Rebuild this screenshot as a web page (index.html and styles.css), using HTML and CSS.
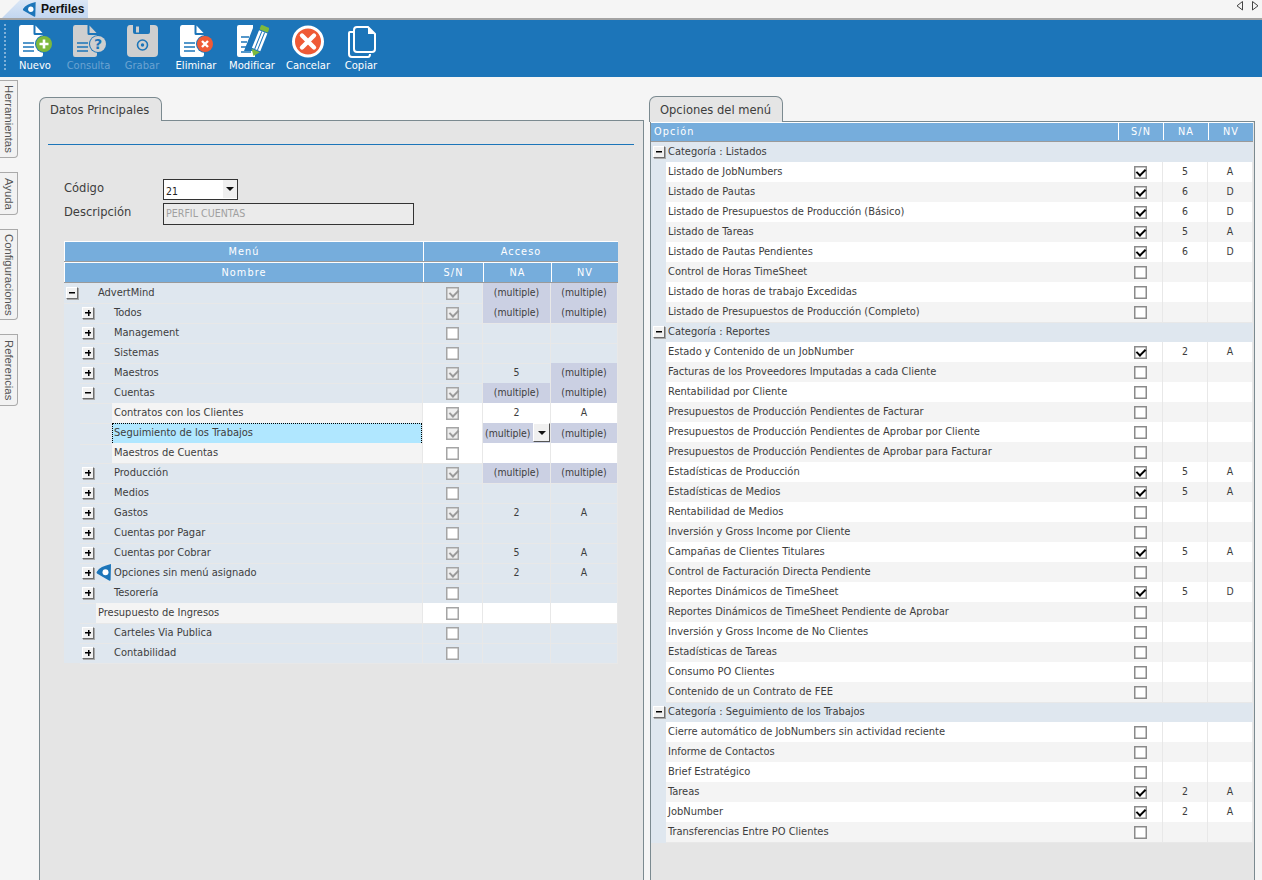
FILE: index.html
```html
<!DOCTYPE html>
<html lang="es">
<head>
<meta charset="utf-8">
<title>Perfiles</title>
<link rel="stylesheet" href="styles.css">
</head>
<body>
<svg class="defs" width="0" height="0" aria-hidden="true">
  <symbol id="logo" viewBox="0 0 16 17"><path d="M15 0 L14.6 16 Q14.4 17 13 16.4 L1 9.6 Q0 8.5 1 7.4 Q4 2.5 15 0Z" fill="#1c75b9"/><circle cx="9.5" cy="8.2" r="3" fill="#fff"/></symbol>
  <symbol id="doc" viewBox="0 0 34 34">
    <path d="M3 1 H15.5 V9.5 Q15.5 11 17 11 H25 V30.5 Q25 33 22.5 33 H3 Q1 33 1 30.5 V3.5 Q1 1 3 1Z"/>
    <path d="M17.5 1.5 L24.5 9 H17.5Z"/>
  </symbol>
</svg>
<header class="tabstrip">
  <div class="doc-tab"><svg class="logo-small"><use href="#logo"/></svg><span>Perfiles</span></div>
  <div class="nav-arrows">
    <svg width="8" height="10" viewBox="0 0 8 10"><path d="M6.5 .5 V9 L1 4.8Z" fill="none" stroke="#444"/></svg>
    <svg width="8" height="10" viewBox="0 0 8 10"><path d="M1.5 .5 V9 L7 4.8Z" fill="none" stroke="#444"/></svg>
  </div>
</header>
<nav class="toolbar">
  <div class="grip"></div>
  <div class="tool w54"><svg class="ico" viewBox="0 0 34 34"><use href="#doc" fill="#fff"/><path d="M5 19H16M5 23H16M5 27H16" stroke="#1c75b9" stroke-width="1.6"/><circle cx="26" cy="20" r="9" fill="#1c75b9"/><circle cx="26" cy="20" r="8" fill="#7db93c"/><path d="M26 15.5V24.5M21.5 20H30.5" stroke="#fff" stroke-width="2.6"/></svg><span>Nuevo</span></div>
  <div class="tool w53 off"><svg class="ico" viewBox="0 0 34 34"><use href="#doc" fill="#cfcfcf"/><path d="M5 19H16M5 23H16M5 27H16" stroke="#1c75b9" stroke-width="1.6"/><circle cx="26" cy="20" r="9" fill="#1c75b9"/><circle cx="26" cy="20" r="8" fill="#cfcfcf"/><text x="26" y="25" text-anchor="middle" class="qm">?</text></svg><span>Consulta</span></div>
  <div class="tool w54 off"><svg class="ico" viewBox="0 0 34 34"><path d="M5 1 H29 Q33 1 33 5 V29 Q33 33 29 33 H6 Q2 33 2 29 V5 Q2 1 5 1Z" fill="#cfcfcf"/><path d="M8 1 H25 V8 Q25 10 23 10 H10 Q8 10 8 8Z" fill="#1c75b9"/><rect x="11" y="2.500" width="3" height="6" fill="#cfcfcf"/><circle cx="17.500" cy="21" r="5" fill="none" stroke="#1c75b9" stroke-width="1.600"/><circle cx="17.500" cy="21" r="1.700" fill="#1c75b9"/></svg><span>Grabar</span></div>
  <div class="tool w54"><svg class="ico" viewBox="0 0 34 34"><use href="#doc" fill="#fff"/><path d="M5 19H16M5 23H16M5 27H16" stroke="#1c75b9" stroke-width="1.6"/><circle cx="26" cy="20" r="9" fill="#1c75b9"/><circle cx="26" cy="20" r="8" fill="#ef5a36"/><path d="M23 17L29 23M29 17L23 23" stroke="#fff" stroke-width="2.4"/></svg><span>Eliminar</span></div>
  <div class="tool w58"><svg class="ico" viewBox="0 0 34 34"><path d="M4 1 H18 V4 L9 27 H20 V33 H4 Q2 33 2 31 V3 Q2 1 4 1Z" fill="#fff"/><path d="M6 13H14M6 18H12M6 23H11M6 28H16" stroke="#1c75b9" stroke-width="1.600"/><g transform="rotate(22 24 17)"><rect x="20" y="1" width="9" height="5" rx="1" fill="#7db93c"/><rect x="20" y="7" width="9" height="19" fill="#fff"/><path d="M23 7V26M26 7V26" stroke="#1c75b9" stroke-width="1"/><path d="M20 27 H29 L24.500 33Z" fill="#7db93c"/></g></svg><span>Modificar</span></div>
  <div class="tool w54"><svg class="ico" viewBox="0 0 34 34"><circle cx="17" cy="17.500" r="14.500" fill="#ef5a36" stroke="#fff" stroke-width="3"/><path d="M11 11.500L23 23.500M23 11.500L11 23.500" stroke="#fff" stroke-width="4.400" stroke-linecap="round"/></svg><span>Cancelar</span></div>
  <div class="tool w52"><svg class="ico" viewBox="0 0 34 34"><path d="M10 8 H6 Q5 8 5 9 V30 Q5 33 8 33 H24 Q26 33 26 30" fill="none" stroke="#fff" stroke-width="2"/><path d="M13 3 H24 L31 10 V25 Q31 28 28 28 H13 Q10 28 10 25 V6 Q10 3 13 3Z" fill="#1c75b9" stroke="#fff" stroke-width="2"/><path d="M24 3 V10 H31Z" fill="#fff"/></svg><span>Copiar</span></div>
</nav>
<main class="main">
  <aside class="side">
    <div class="side-tab h77">Herramientas</div>
    <div class="side-tab h43">Ayuda</div>
    <div class="side-tab h91">Configuraciones</div>
    <div class="side-tab h72">Referencias</div>
  </aside>
  <section class="pane pane-left">
    <div class="pane-tab tab-l">Datos Principales</div>
    <div class="pane-body body-l">
      <div class="rule"></div>
      <div class="form">
        <div class="form-row"><label>Código</label><div class="select"><span>21</span><i class="sel-btn"></i></div></div>
        <div class="form-row"><label>Descripción</label><div class="input">PERFIL CUENTAS</div></div>
      </div>
      <div class="tree">
        <div class="tr head"><div class="th span1">Menú</div><div class="th span3">Acceso</div></div>
        <div class="tr head head2"><div class="th">Nombre</div><div class="th">S/N</div><div class="th">NA</div><div class="th">NV</div></div>

        <div class="tr"><div class="nm"><span class="sl"><i class="exp minus"></i></span><span class="sl"></span><span class="lb">AdvertMind</span></div><div class="c"><i class="cb on dis"></i></div><div class="c m">(multiple)</div><div class="c m">(multiple)</div></div>
        <div class="tr"><div class="nm"><span class="sl bare"></span><span class="sl"><i class="exp plus"></i></span><span class="sl"></span><span class="lb">Todos</span></div><div class="c"><i class="cb on dis"></i></div><div class="c m">(multiple)</div><div class="c m">(multiple)</div></div>
        <div class="tr"><div class="nm"><span class="sl bare"></span><span class="sl"><i class="exp plus"></i></span><span class="sl"></span><span class="lb">Management</span></div><div class="c"><i class="cb dis"></i></div><div class="c"></div><div class="c"></div></div>
        <div class="tr"><div class="nm"><span class="sl bare"></span><span class="sl"><i class="exp plus"></i></span><span class="sl"></span><span class="lb">Sistemas</span></div><div class="c"><i class="cb dis"></i></div><div class="c"></div><div class="c"></div></div>
        <div class="tr"><div class="nm"><span class="sl bare"></span><span class="sl"><i class="exp plus"></i></span><span class="sl"></span><span class="lb">Maestros</span></div><div class="c"><i class="cb on dis"></i></div><div class="c">5</div><div class="c m">(multiple)</div></div>
        <div class="tr"><div class="nm"><span class="sl bare"></span><span class="sl"><i class="exp minus"></i></span><span class="sl"></span><span class="lb">Cuentas</span></div><div class="c"><i class="cb on dis"></i></div><div class="c m">(multiple)</div><div class="c m">(multiple)</div></div>

        <div class="tr leaf"><div class="nm"><span class="sl bare"></span><span class="sl"></span><span class="sl"></span><span class="lb fill">Contratos con los Clientes</span></div><div class="c"><i class="cb on dis"></i></div><div class="c">2</div><div class="c">A</div></div>
        <div class="tr leaf"><div class="nm"><span class="sl bare"></span><span class="sl"></span><span class="sl"></span><span class="lb fill sel">Seguimiento de los Trabajos</span></div><div class="c"><i class="cb on dis"></i></div><div class="c m drop"><span>(multiple)</span><i class="drop-btn"></i></div><div class="c m">(multiple)</div></div>
        <div class="tr leaf"><div class="nm"><span class="sl bare"></span><span class="sl"></span><span class="sl"></span><span class="lb fill">Maestros de Cuentas</span></div><div class="c"><i class="cb dis"></i></div><div class="c"></div><div class="c"></div></div>

        <div class="tr"><div class="nm"><span class="sl bare"></span><span class="sl"><i class="exp plus"></i></span><span class="sl"></span><span class="lb">Producción</span></div><div class="c"><i class="cb on dis"></i></div><div class="c m">(multiple)</div><div class="c m">(multiple)</div></div>
        <div class="tr"><div class="nm"><span class="sl bare"></span><span class="sl"><i class="exp plus"></i></span><span class="sl"></span><span class="lb">Medios</span></div><div class="c"><i class="cb dis"></i></div><div class="c"></div><div class="c"></div></div>
        <div class="tr"><div class="nm"><span class="sl bare"></span><span class="sl"><i class="exp plus"></i></span><span class="sl"></span><span class="lb">Gastos</span></div><div class="c"><i class="cb on dis"></i></div><div class="c">2</div><div class="c">A</div></div>
        <div class="tr"><div class="nm"><span class="sl bare"></span><span class="sl"><i class="exp plus"></i></span><span class="sl"></span><span class="lb">Cuentas por Pagar</span></div><div class="c"><i class="cb dis"></i></div><div class="c"></div><div class="c"></div></div>
        <div class="tr"><div class="nm"><span class="sl bare"></span><span class="sl"><i class="exp plus"></i></span><span class="sl"></span><span class="lb">Cuentas por Cobrar</span></div><div class="c"><i class="cb on dis"></i></div><div class="c">5</div><div class="c">A</div></div>
        <div class="tr"><div class="nm"><span class="sl bare"></span><span class="sl"><i class="exp plus"></i></span><span class="sl"><svg class="logo-row"><use href="#logo"/></svg></span><span class="lb">Opciones sin menú asignado</span></div><div class="c"><i class="cb on dis"></i></div><div class="c">2</div><div class="c">A</div></div>
        <div class="tr"><div class="nm"><span class="sl bare"></span><span class="sl"><i class="exp plus"></i></span><span class="sl"></span><span class="lb">Tesorería</span></div><div class="c"><i class="cb dis"></i></div><div class="c"></div><div class="c"></div></div>
        <div class="tr leaf"><div class="nm"><span class="sl bare"></span><span class="sl"></span><span class="lb fill">Presupuesto de Ingresos</span></div><div class="c"><i class="cb dis"></i></div><div class="c"></div><div class="c"></div></div>
        <div class="tr"><div class="nm"><span class="sl bare"></span><span class="sl"><i class="exp plus"></i></span><span class="sl"></span><span class="lb">Carteles Via Publica</span></div><div class="c"><i class="cb dis"></i></div><div class="c"></div><div class="c"></div></div>
        <div class="tr"><div class="nm"><span class="sl bare"></span><span class="sl"><i class="exp plus"></i></span><span class="sl"></span><span class="lb">Contabilidad</span></div><div class="c"><i class="cb dis"></i></div><div class="c"></div><div class="c"></div></div>
      </div>
    </div>
  </section>
  <section class="pane pane-right">
    <div class="pane-tab tab-r">Opciones del menú</div>
    <div class="pane-body body-r">
      <div class="opts">
        <div class="ot head"><div class="th left">Opción</div><div class="th">S/N</div><div class="th">NA</div><div class="th">NV</div></div>

        <div class="ot grp"><div class="nm"><span class="ex-sl"><i class="exp minus"></i></span><span class="lb">Categoría : Listados</span></div></div>
        <div class="ot w"><div class="nm"><span class="ex-sl"></span><span class="lb fill">Listado de JobNumbers</span></div><div class="c"><i class="cb on"></i></div><div class="c">5</div><div class="c">A</div></div>
        <div class="ot g"><div class="nm"><span class="ex-sl"></span><span class="lb fill">Listado de Pautas</span></div><div class="c"><i class="cb on"></i></div><div class="c">6</div><div class="c">D</div></div>
        <div class="ot w"><div class="nm"><span class="ex-sl"></span><span class="lb fill">Listado de Presupuestos de Producción (Básico)</span></div><div class="c"><i class="cb on"></i></div><div class="c">6</div><div class="c">D</div></div>
        <div class="ot g"><div class="nm"><span class="ex-sl"></span><span class="lb fill">Listado de Tareas</span></div><div class="c"><i class="cb on"></i></div><div class="c">5</div><div class="c">A</div></div>
        <div class="ot w"><div class="nm"><span class="ex-sl"></span><span class="lb fill">Listado de Pautas Pendientes</span></div><div class="c"><i class="cb on"></i></div><div class="c">6</div><div class="c">D</div></div>
        <div class="ot g"><div class="nm"><span class="ex-sl"></span><span class="lb fill">Control de Horas TimeSheet</span></div><div class="c"><i class="cb"></i></div><div class="c"></div><div class="c"></div></div>
        <div class="ot w"><div class="nm"><span class="ex-sl"></span><span class="lb fill">Listado de horas de trabajo Excedidas</span></div><div class="c"><i class="cb"></i></div><div class="c"></div><div class="c"></div></div>
        <div class="ot g"><div class="nm"><span class="ex-sl"></span><span class="lb fill">Listado de Presupuestos de Producción (Completo)</span></div><div class="c"><i class="cb"></i></div><div class="c"></div><div class="c"></div></div>

        <div class="ot grp"><div class="nm"><span class="ex-sl"><i class="exp minus"></i></span><span class="lb">Categoría : Reportes</span></div></div>
        <div class="ot w"><div class="nm"><span class="ex-sl"></span><span class="lb fill">Estado y Contenido de un JobNumber</span></div><div class="c"><i class="cb on"></i></div><div class="c">2</div><div class="c">A</div></div>
        <div class="ot g"><div class="nm"><span class="ex-sl"></span><span class="lb fill">Facturas de los Proveedores Imputadas a cada Cliente</span></div><div class="c"><i class="cb"></i></div><div class="c"></div><div class="c"></div></div>
        <div class="ot w"><div class="nm"><span class="ex-sl"></span><span class="lb fill">Rentabilidad por Cliente</span></div><div class="c"><i class="cb"></i></div><div class="c"></div><div class="c"></div></div>
        <div class="ot g"><div class="nm"><span class="ex-sl"></span><span class="lb fill">Presupuestos de Producción Pendientes de Facturar</span></div><div class="c"><i class="cb"></i></div><div class="c"></div><div class="c"></div></div>
        <div class="ot w"><div class="nm"><span class="ex-sl"></span><span class="lb fill">Presupuestos de Producción Pendientes de Aprobar por Cliente</span></div><div class="c"><i class="cb"></i></div><div class="c"></div><div class="c"></div></div>
        <div class="ot g"><div class="nm"><span class="ex-sl"></span><span class="lb fill">Presupuestos de Producción Pendientes de Aprobar para Facturar</span></div><div class="c"><i class="cb"></i></div><div class="c"></div><div class="c"></div></div>
        <div class="ot w"><div class="nm"><span class="ex-sl"></span><span class="lb fill">Estadísticas de Producción</span></div><div class="c"><i class="cb on"></i></div><div class="c">5</div><div class="c">A</div></div>
        <div class="ot g"><div class="nm"><span class="ex-sl"></span><span class="lb fill">Estadísticas de Medios</span></div><div class="c"><i class="cb on"></i></div><div class="c">5</div><div class="c">A</div></div>
        <div class="ot w"><div class="nm"><span class="ex-sl"></span><span class="lb fill">Rentabilidad de Medios</span></div><div class="c"><i class="cb"></i></div><div class="c"></div><div class="c"></div></div>
        <div class="ot g"><div class="nm"><span class="ex-sl"></span><span class="lb fill">Inversión y Gross Income por Cliente</span></div><div class="c"><i class="cb"></i></div><div class="c"></div><div class="c"></div></div>
        <div class="ot w"><div class="nm"><span class="ex-sl"></span><span class="lb fill">Campañas de Clientes Titulares</span></div><div class="c"><i class="cb on"></i></div><div class="c">5</div><div class="c">A</div></div>
        <div class="ot g"><div class="nm"><span class="ex-sl"></span><span class="lb fill">Control de Facturación Directa Pendiente</span></div><div class="c"><i class="cb"></i></div><div class="c"></div><div class="c"></div></div>
        <div class="ot w"><div class="nm"><span class="ex-sl"></span><span class="lb fill">Reportes Dinámicos de TimeSheet</span></div><div class="c"><i class="cb on"></i></div><div class="c">5</div><div class="c">D</div></div>
        <div class="ot g"><div class="nm"><span class="ex-sl"></span><span class="lb fill">Reportes Dinámicos de TimeSheet Pendiente de Aprobar</span></div><div class="c"><i class="cb"></i></div><div class="c"></div><div class="c"></div></div>
        <div class="ot w"><div class="nm"><span class="ex-sl"></span><span class="lb fill">Inversión y Gross Income de No Clientes</span></div><div class="c"><i class="cb"></i></div><div class="c"></div><div class="c"></div></div>
        <div class="ot g"><div class="nm"><span class="ex-sl"></span><span class="lb fill">Estadísticas de Tareas</span></div><div class="c"><i class="cb"></i></div><div class="c"></div><div class="c"></div></div>
        <div class="ot w"><div class="nm"><span class="ex-sl"></span><span class="lb fill">Consumo PO Clientes</span></div><div class="c"><i class="cb"></i></div><div class="c"></div><div class="c"></div></div>
        <div class="ot g"><div class="nm"><span class="ex-sl"></span><span class="lb fill">Contenido de un Contrato de FEE</span></div><div class="c"><i class="cb"></i></div><div class="c"></div><div class="c"></div></div>

        <div class="ot grp"><div class="nm"><span class="ex-sl"><i class="exp minus"></i></span><span class="lb">Categoría : Seguimiento de los Trabajos</span></div></div>
        <div class="ot w"><div class="nm"><span class="ex-sl"></span><span class="lb fill">Cierre automático de JobNumbers sin actividad reciente</span></div><div class="c"><i class="cb"></i></div><div class="c"></div><div class="c"></div></div>
        <div class="ot g"><div class="nm"><span class="ex-sl"></span><span class="lb fill">Informe de Contactos</span></div><div class="c"><i class="cb"></i></div><div class="c"></div><div class="c"></div></div>
        <div class="ot w"><div class="nm"><span class="ex-sl"></span><span class="lb fill">Brief Estratégico</span></div><div class="c"><i class="cb"></i></div><div class="c"></div><div class="c"></div></div>
        <div class="ot g"><div class="nm"><span class="ex-sl"></span><span class="lb fill">Tareas</span></div><div class="c"><i class="cb on"></i></div><div class="c">2</div><div class="c">A</div></div>
        <div class="ot w"><div class="nm"><span class="ex-sl"></span><span class="lb fill">JobNumber</span></div><div class="c"><i class="cb on"></i></div><div class="c">2</div><div class="c">A</div></div>
        <div class="ot g"><div class="nm"><span class="ex-sl"></span><span class="lb fill">Transferencias Entre PO Clientes</span></div><div class="c"><i class="cb"></i></div><div class="c"></div><div class="c"></div></div>
      </div>
    </div>
  </section>
</main>
</body>
</html>
```

FILE: styles.css
```css
* { box-sizing: border-box; }
html, body { margin: 0; height: 100%; }
body {
  width: 1262px;
  height: 880px;
  overflow: hidden;
  background: #f5f5f5;
  color: #3d3d3d;
  font-family: "DejaVu Sans Condensed", "DejaVu Sans", sans-serif;
  font-size: 10px;
  display: flex;
  flex-direction: column;
}
.defs { position: absolute; }
i { display: block; font-style: normal; }

/* top strip */
.tabstrip {
  height: 20px;
  flex: none;
  display: flex;
  justify-content: space-between;
  border-bottom: 2px solid #a3a3a3;
}
.doc-tab {
  width: 86px;
  height: 18px;
  margin-left: 2px;
  padding-left: 20px;
  display: flex;
  align-items: center;
  gap: 4px;
  background: linear-gradient(#dbe7f6, #c2d6f0);
  clip-path: polygon(0 100%, 18px 0, 100% 0, 100% 100%);
  font: bold 12px "Liberation Sans", sans-serif;
  color: #111;
}
.logo-small { width: 15px; height: 15px; }
.nav-arrows { display: flex; gap: 7px; padding: 1px 3px 0 0; }

/* toolbar */
.toolbar {
  height: 57px;
  flex: none;
  background: #1c75b9;
  display: flex;
  padding-left: 8px;
  color: #fff;
  position: relative;
}
.grip {
  position: absolute;
  left: 4px;
  top: 4px;
  height: 46px;
  border-left: 2px dotted #7fb0d8;
}
.tool {
  display: flex;
  flex-direction: column;
  align-items: center;
  padding-top: 4px;
  font-size: 11.1px;
}
.tool span { line-height: 16px; }
.ico { width: 34px; height: 34px; flex: none; }
.off { color: #6ba3d1; }
.qm { font: bold 14px "DejaVu Sans", sans-serif; fill: #1c75b9; }
.w54 { width: 54px; }
.w53 { width: 53px; }
.w58 { width: 58px; }
.w52 { width: 52px; }

/* body */
.main { flex: 1; display: flex; min-height: 0; }
.side { width: 39px; flex: none; padding-top: 3px; display: flex; flex-direction: column; gap: 14px; }
.side-tab {
  width: 18px;
  writing-mode: vertical-rl;
  border: 1px solid #aaa;
  border-left: 0;
  border-radius: 0 0 4px 0;
  background: #f2f2f2;
  font: 11.3px "Liberation Sans", sans-serif;
  color: #555;
  text-align: center;
  line-height: 16px;
}
.h77 { height: 78px; }
.h43 { height: 43px; }
.h91 { height: 91px; }
.h72 { height: 72px; }

.pane { display: flex; flex-direction: column; }
.pane-left { width: 605px; padding-top: 20px; }
.pane-right { width: 606px; margin-left: 5px; padding-top: 19px; }
.pane-tab {
  margin-bottom: -1px;
  position: relative;
  z-index: 1;
  background: #e5e5e5;
  border: 1px solid #7b8a90;
  border-bottom: 0;
  border-radius: 7px 7px 0 0;
  font-size: 12.8px;
  padding-left: 10px;
  color: #3d3d3d;
}
.tab-l { width: 123px; height: 24px; line-height: 24px; }
.tab-r { width: 134px; height: 26px; line-height: 26px; }
.pane-body {
  flex: 1;
  background: #e5e5e5;
  border: 1px solid #7b8a90;
  border-bottom: 0;
}
.body-l { padding: 23px 9px 0 8px; }
.body-r { padding: 0; margin-left: 1px; }

.rule { height: 1px; background: #1c75b9; }
.form { padding: 34px 0 0 16px; display: flex; flex-direction: column; gap: 3px; }
.form-row { display: flex; align-items: center; font-size: 12.8px; }
.form-row label { width: 99px; margin-top: -4px; }
.form-row:last-child label { margin-top: -6px; }
.select {
  width: 75px;
  height: 21px;
  border: 1px solid #333;
  background: #fff;
  display: flex;
  justify-content: space-between;
  padding: 1px 0 0 2px;
  font-size: 10.4px;
  line-height: 20px;
  color: #222;
}
.sel-btn { width: 14px; height: 18px; margin-top: -1px; background: #efefef; position: relative; }
.sel-btn::after {
  content: "";
  position: absolute;
  left: 3px;
  top: 7px;
  border: 4px solid transparent;
  border-top: 4px solid #111;
  border-bottom: 0;
}
.input {
  width: 251px;
  height: 22px;
  border: 1px solid #333;
  background: #ebebeb;
  color: #a0a0a0;
  font-size: 10.6px;
  line-height: 19px;
  padding-left: 2px;
}

/* tables */
.tree { width: 554px; margin: 16px 0 0 16px; }
.tr, .ot { display: grid; height: 20px; background: #dfe7ef; }
.tr { grid-template-columns: 359px 60px 68px 67px; }
.ot { grid-template-columns: 467px 45px 45px 45px; }
.opts { width: 602px; }
.head { background: #76addc; color: #fff; height: 21px; border-top: 1px solid #fff; border-bottom: 1px solid #9a9a9a; }
.ot.head { height: 20px; }
.ot.head .th { line-height: 17px; height: 17px; }
.tr.head { grid-template-columns: 359px 195px; }
.tr.head2 { grid-template-columns: 359px 60px 68px 67px; }
.th {
  border-left: 1px solid #fff;
  text-align: center;
  font-size: 10.8px;
  letter-spacing: 1.1px;
  line-height: 20px;
  height: 19px;
}
.ot.head .th:first-child { border-left: 0; }
.th.left { text-align: left; padding-left: 3px; }

.nm { display: flex; min-width: 0; grid-column: 1; }
.grp .nm { grid-column: 1 / -1; }
.sl { width: 16px; flex: none; border-bottom: 1px solid #e8e8e8; }
.sl.bare { border-bottom: 0; }
.ex-sl { width: 15px; flex: none; background: #dfe7ef; }
.lb {
  flex: 1;
  line-height: 20px;
  padding-left: 2px;
  border-bottom: 1px solid #e8e8e8;
  white-space: nowrap;
  font-size: 11px;
  color: #3d3d3d;
}
.tr .nm { border-right: 1px solid #e8e8e8; }
.leaf .fill { background: #f4f4f4; }
.sel { background: #b0e7ff !important; outline: 1px dotted #000; outline-offset: -1px; }
.leaf .c { background: #fff; }
.c {
  border-right: 1px solid #e8e8e8;
  border-bottom: 1px solid #e8e8e8;
  padding-bottom: 2px;
  display: flex;
  align-items: center;
  justify-content: center;
  font-size: 10.4px;
}
.c.m { background: #cbd0e3 !important; }
.drop { justify-content: space-between; padding-left: 2px; }
.drop-btn {
  width: 17px;
  height: 19px;
  align-self: flex-start;
  background: #f0f0f0;
  border: 1px solid #fff;
  border-right-color: #555;
  border-bottom-color: #555;
  position: relative;
}
.drop-btn::after {
  content: "";
  position: absolute;
  left: 4px;
  top: 7px;
  border: 4px solid transparent;
  border-top: 4px solid #111;
  border-bottom: 0;
}
.ot.w .fill, .ot.w .c { background: #fff; }
.ot.g .fill, .ot.g .c { background: #f4f4f4; }

.exp {
  width: 12px;
  height: 12px;
  margin: 4px 0 0 2px;
  background: #f1f1f1;
  border: 1px solid #fff;
  border-right-color: #6d6d6d;
  border-bottom-color: #6d6d6d;
  box-shadow: 1px 1px 0 #a8a8a8;
  position: relative;
}
.exp::before {
  content: "";
  position: absolute;
  left: 2px;
  top: 4px;
  width: 6px;
  height: 1px;
  background: #000;
  box-shadow: 0 .5px 0 #000;
}
.plus::after {
  content: "";
  position: absolute;
  left: 4.5px;
  top: 2px;
  width: 1px;
  height: 6px;
  background: #000;
  box-shadow: .5px 0 0 #000;
}
.logo-row { display: block; width: 16px; height: 17px; margin-top: 1px; }

.cb {
  width: 13px;
  height: 13px;
  margin-top: 2px;
  background: #fff;
  border: 1px solid #8b8b8b;
  box-shadow: inset 0 0 0 .5px #8b8b8b;
  position: relative;
}
.cb.dis { border-color: #a5a5a5; box-shadow: inset 0 0 0 .5px #a5a5a5; }
.cb.dis.on { background: #eeeeee; }
.cb.on::after {
  content: "";
  position: absolute;
  left: 3.5px;
  top: 0;
  width: 4px;
  height: 7px;
  border-right: 2px solid #000;
  border-bottom: 2px solid #000;
  transform: rotate(45deg);
}
.cb.dis.on::after { border-color: #9a9a9a; }
```
